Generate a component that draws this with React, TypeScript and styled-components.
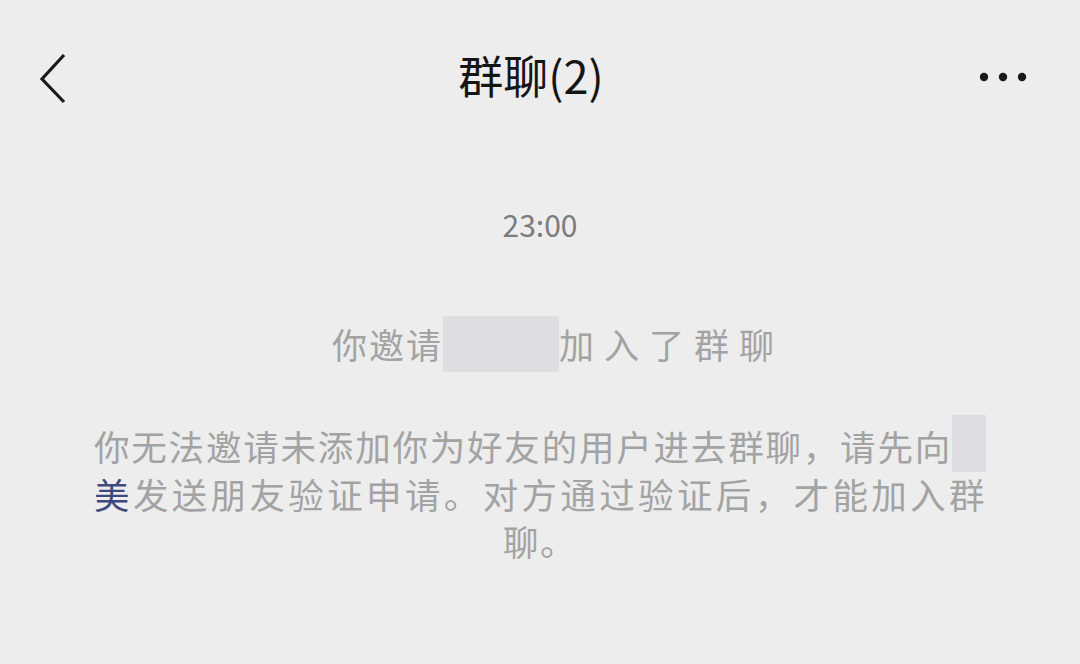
import styled, { createGlobalStyle } from 'styled-components';

const GlobalStyle = createGlobalStyle`
  html, body {
    margin: 0;
    padding: 0;
    background: #ededed;
  }
  body {
    font-family: "Noto Sans CJK SC", "Noto Sans", sans-serif;
  }
`;

const Page = styled.div`
  width: 1080px;
  height: 664px;
  background: #ededed;
  overflow: hidden;
`;

const Header = styled.header`
  height: 154px;
  display: flex;
  align-items: center;
  justify-content: space-between;
  padding: 0 46px 0 28px;
  box-sizing: border-box;
`;

const IconButton = styled.button`
  width: 60px;
  height: 60px;
  display: flex;
  align-items: center;
  justify-content: center;
  background: none;
  border: none;
  padding: 0;
`;

const Title = styled.h1`
  margin: 0 0 6px;
  font-size: 45px;
  font-weight: 400;
  color: #151515;
`;

const Messages = styled.main`
  display: flex;
  flex-direction: column;
  align-items: center;
  padding: 48px 94px 0;
`;

const Time = styled.div`
  font-size: 30px;
  color: #7c7c7c;
  line-height: 44px;
`;

const SystemLine = styled.div`
  margin: 70px 0 0 36px;
  font-size: 35px;
  line-height: 56px;
  color: #a3a3a3;
  letter-spacing: 2px;
  display: flex;
  align-items: center;
`;

const Spread = styled.span`
  letter-spacing: 10px;
`;

const Masked = styled.span<{ $w: number; $h: number }>`
  display: inline-block;
  width: ${(p) => p.$w}px;
  height: ${(p) => p.$h}px;
  background: #dedee2;
  vertical-align: middle;
`;

const InlineMask = styled(Masked)`
  margin: -18px 0 -2px;
`;

const Notice = styled.p`
  margin: 50px 0 0;
  width: 892px;
  font-size: 35.5px;
  line-height: 47.5px;
  letter-spacing: 1.5px;
  color: #a3a3a3;
  text-align: justify;
  text-align-last: center;
`;

const Link = styled.span`
  color: #3e4a7c;
`;

function BackIcon() {
  return (
    <svg width="40" height="60" viewBox="0 0 40 60">
      <path d="M26 8 L4 32 L26 55" fill="none" stroke="#1a1a1a" strokeWidth="3.2" />
    </svg>
  );
}

function MoreIcon() {
  return (
    <svg width="60" height="20" viewBox="0 0 60 20">
      <circle cx="10" cy="10" r="4.2" fill="#1a1a1a" />
      <circle cx="29" cy="10" r="4.2" fill="#1a1a1a" />
      <circle cx="48" cy="10" r="4.2" fill="#1a1a1a" />
    </svg>
  );
}

export default function App() {
  return (
    <Page>
      <GlobalStyle />
      <Header>
        <IconButton>
          <BackIcon />
        </IconButton>
        <Title>群聊(2)</Title>
        <IconButton>
          <MoreIcon />
        </IconButton>
      </Header>
      <Messages>
        <Time>23:00</Time>
        <SystemLine>
          你邀请<Masked $w={116} $h={56} />
          <Spread>加入了群聊</Spread>
        </SystemLine>
        <Notice>
          你无法邀请未添加你为好友的用户进去群聊，请先向<InlineMask $w={34} $h={57} />
          <Link>美</Link>发送朋友验证申请。对方通过验证后，才能加入群聊。
        </Notice>
      </Messages>
    </Page>
  );
}
